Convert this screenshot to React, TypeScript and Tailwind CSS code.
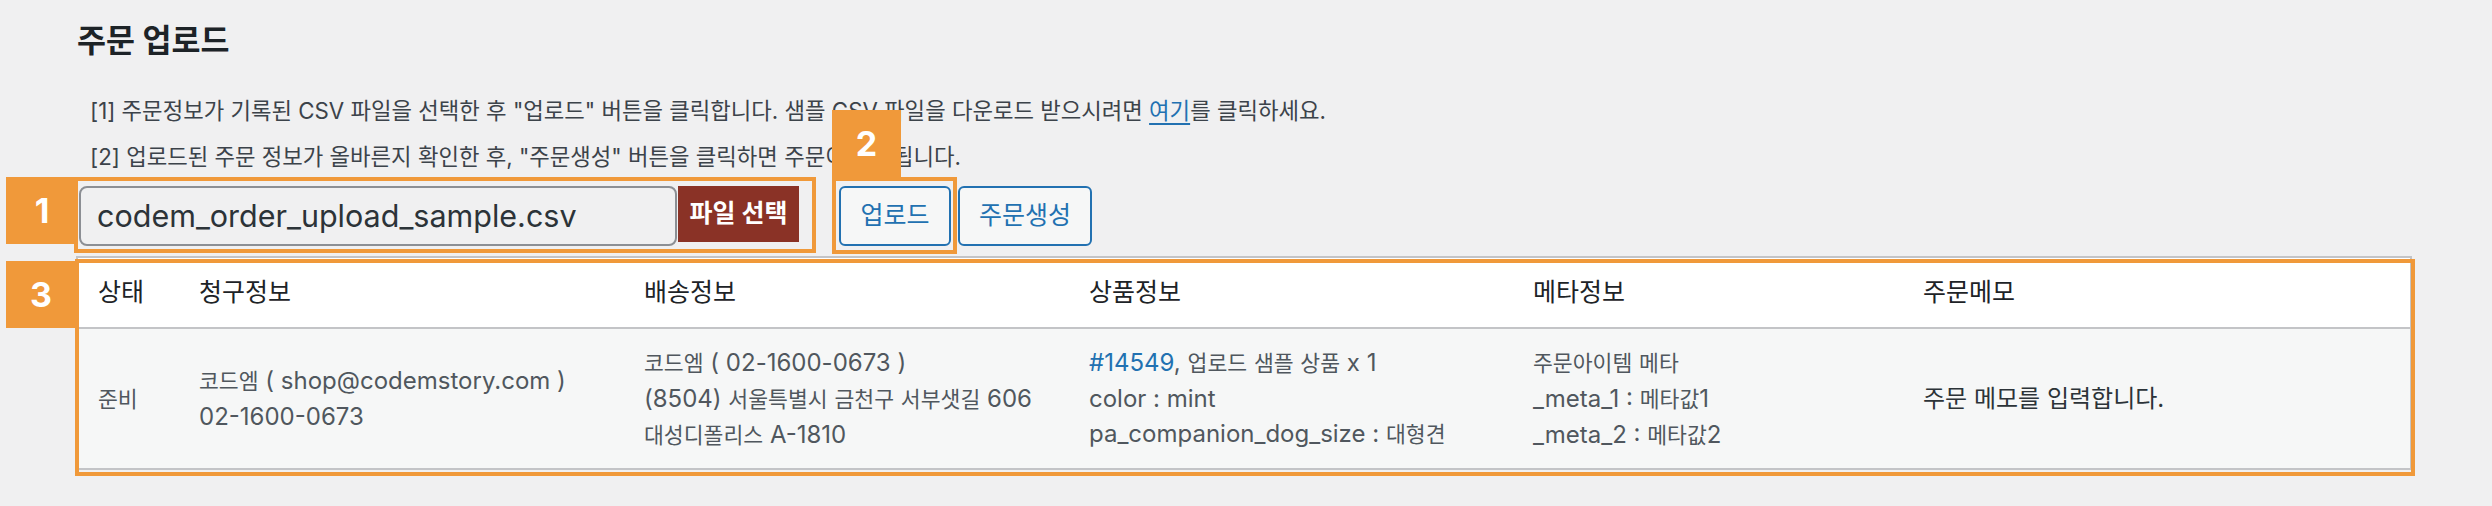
import type {ReactNode} from 'react';

const badgeClassName =
  'absolute flex items-center justify-center bg-[#f0993a] text-[34px] font-bold leading-none text-white';
const outlineClassName = 'pointer-events-none absolute border-4 border-[#f0993a]';
const cellClassName = 'whitespace-nowrap px-5 text-[24px] leading-[35px]';
const gridClassName = 'grid grid-cols-[101px_445px_445px_444px_390px_1fr] items-center';

const headers = ['상태', '청구정보', '배송정보', '상품정보', '메타정보', '주문메모'];

// 한글 구간은 본문 글꼴보다 조금 작게 (원본 화면의 한글 폭에 맞춤)
function Ko({text}: {text: string}) {
  return (
    <>
      {text.split(/([가-힣]+)/).map((part, i) =>
        /[가-힣]/.test(part) ? (
          <span key={i} className="text-[0.9em]">
            {part}
          </span>
        ) : (
          part
        )
      )}
    </>
  );
}

function Cell({children, className = ''}: {children: ReactNode; className?: string}) {
  return <div className={`${cellClassName} ${className}`}>{children}</div>;
}

function Lines({items}: {items: string[]}) {
  return (
    <>
      {items.map((item) => (
        <p key={item}>
          <Ko text={item} />
        </p>
      ))}
    </>
  );
}

export default function App() {
  return (
    <div className="min-h-[506px] bg-[#f0f0f1] pl-[76px] pr-[80px] pt-[20px] font-['Inter','Noto_Sans_CJK_KR',sans-serif] text-[#3c434a]">
      <h1 className="pl-px text-[31.5px] font-bold leading-[42px] text-[#1d2327]">주문 업로드</h1>

      <div className="mt-[26px] pl-[14px] text-[22.3px] leading-[46px]">
        <p>
          [1] 주문정보가 기록된 CSV 파일을 선택한 후 "업로드" 버튼을 클릭합니다. 샘플 CSV 파일을 다운로드
          받으시려면{' '}
          <a href="#" className="text-[#2271b1] underline underline-offset-4">
            여기
          </a>
          를 클릭하세요.
        </p>
        <p>[2] 업로드된 주문 정보가 올바른지 확인한 후, "주문생성" 버튼을 클릭하면 주문이 생성됩니다.</p>
      </div>

      <div className="mt-[6px] flex items-start">
        <div className="relative ml-[3px] flex items-start gap-px">
          <div className="flex h-[60px] w-[598px] items-center rounded-lg border-2 border-[#8c8f94] bg-[#f0f0f1] pl-4 text-[30.5px] text-[#2c3338]">
            codem_order_upload_sample.csv
          </div>
          <button
            type="button"
            className="h-[56px] w-[121px] bg-[#8a3226] text-[25px] font-bold text-white"
          >
            파일 선택
          </button>
          <div className={`${outlineClassName} -left-[5px] -top-[9px] h-[76px] w-[742px]`} />
          <div className={`${badgeClassName} -left-[73px] -top-[9px] h-[67px] w-[72px]`}>1</div>
        </div>

        <div className="relative ml-[40px]">
          <button
            type="button"
            className="h-[60px] w-[112px] rounded-md border-2 border-[#2271b1] bg-[#f6f7f7] text-[25px] text-[#2271b1]"
          >
            업로드
          </button>
          <div className={`${outlineClassName} -left-[7px] -top-[9px] h-[77px] w-[125px]`} />
          <div className={`${badgeClassName} -left-[7px] -top-[76px] h-[67px] w-[69px]`}>2</div>
        </div>

        <button
          type="button"
          className="ml-[7px] h-[60px] w-[134px] rounded-md border-2 border-[#2271b1] bg-[#f6f7f7] text-[25px] text-[#2271b1]"
        >
          주문생성
        </button>
      </div>

      <div className="relative mt-[10px]">
        <div className="border-2 border-[#c3c4c7]">
          <div className={`${gridClassName} h-[71px] border-b-2 border-[#c3c4c7] bg-white text-[25px] text-[#1d2327]`}>
            {headers.map((item) => (
              <span key={item} className="px-5">
                {item}
              </span>
            ))}
          </div>
          <div className={`${gridClassName} h-[139px] bg-[#f6f7f7] text-[#50575e]`}>
            <Cell>
              <Ko text="준비" />
            </Cell>
            <Cell>
              <Lines items={['코드엠 ( shop@codemstory.com )', '02-1600-0673']} />
            </Cell>
            <Cell>
              <Lines items={['코드엠 ( 02-1600-0673 )', '(8504) 서울특별시 금천구 서부샛길 606', '대성디폴리스 A-1810']} />
            </Cell>
            <Cell>
              <p>
                <a href="#" className="text-[#2271b1]">
                  #14549
                </a>
                <Ko text=", 업로드 샘플 상품 x 1" />
              </p>
              <Lines items={['color : mint', 'pa_companion_dog_size : 대형견']} />
            </Cell>
            <Cell>
              <Lines items={['주문아이템 메타', '_meta_1 : 메타값1', '_meta_2 : 메타값2']} />
            </Cell>
            <Cell className="text-[23px] text-[#2c3338]">주문 메모를 입력합니다.</Cell>
          </div>
        </div>
        <div className={`${outlineClassName} -left-px top-[3px] h-[217px] w-[2340px]`} />
        <div className={`${badgeClassName} -left-[70px] top-[5px] h-[67px] w-[70px]`}>3</div>
      </div>
    </div>
  );
}
